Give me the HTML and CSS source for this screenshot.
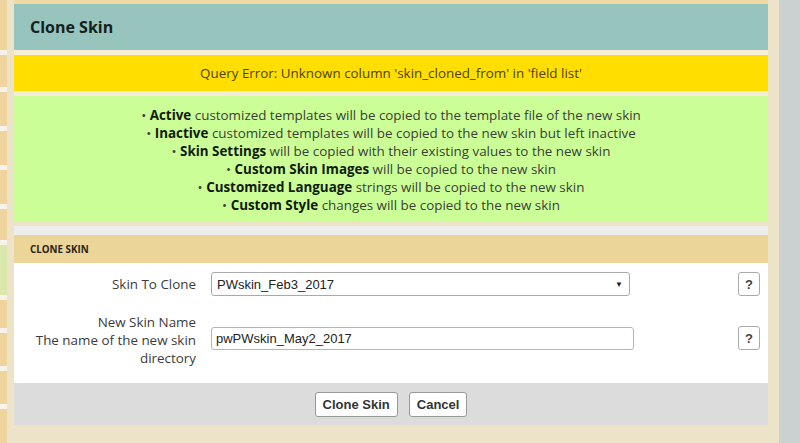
FILE: index.html
```html
<!DOCTYPE html>
<html lang="en">
<head>
    <meta charset="UTF-8">
    <title>Clone Skin</title>
    <link rel="stylesheet" href="styles.css">
</head>
<body>
    <div class="page">
        <div class="side-strip">
            <div class="tile" style="height: 50px"></div>
            <div class="tile" style="height: 32px"></div>
            <div class="tile" style="height: 34px"></div>
            <div class="tile" style="height: 34px"></div>
            <div class="tile" style="height: 34px"></div>
            <div class="tile" style="height: 31px"></div>
            <div class="tile green" style="height: 50px"></div>
            <div class="tile" style="height: 28px"></div>
            <div class="tile" style="height: 33px"></div>
            <div class="tile" style="height: 33px"></div>
            <div class="tile" style="height: 40px"></div>
        </div>

        <div class="main">
            <div class="page-title">Clone Skin</div>

            <div class="error-box">Query Error: Unknown column 'skin_cloned_from' in 'field list'</div>

            <div class="info-box">
                <div>&bull; <b>Active</b> customized templates will be copied to the template file of the new skin</div>
                <div>&bull; <b>Inactive</b> customized templates will be copied to the new skin but left inactive</div>
                <div>&bull; <b>Skin Settings</b> will be copied with their existing values to the new skin</div>
                <div>&bull; <b>Custom Skin Images</b> will be copied to the new skin</div>
                <div>&bull; <b>Customized Language</b> strings will be copied to the new skin</div>
                <div>&bull; <b>Custom Style</b> changes will be copied to the new skin</div>
            </div>

            <div class="form-panel">
                <div class="panel-head">CLONE SKIN</div>

                <div class="panel-body">
                    <div class="form-row first">
                        <div class="label">Skin To Clone</div>
                        <div class="field">
                            <div class="select">
                                <span>PWskin_Feb3_2017</span>
                                <span class="arrow">&#9660;</span>
                            </div>
                        </div>
                        <div class="help"><span class="help-btn">?</span></div>
                    </div>

                    <div class="form-row second">
                        <div class="label">
                            New Skin Name<br>
                            The name of the new skin<br>
                            directory
                        </div>
                        <div class="field">
                            <div class="text-input">pwPWskin_May2_2017</div>
                        </div>
                        <div class="help"><span class="help-btn">?</span></div>
                    </div>
                </div>

                <div class="panel-foot">
                    <button class="btn clone">Clone Skin</button>
                    <button class="btn">Cancel</button>
                </div>
            </div>
        </div>

        <div class="right-gap"></div>
        <div class="right-col"></div>
    </div>
</body>
</html>
```

FILE: styles.css
```css
* {
    margin: 0;
    padding: 0;
    box-sizing: border-box;
}

body {
    font-family: "Open Sans", "Liberation Sans", sans-serif;
    background: #ece3c9;
    color: #333;
    width: 800px;
    height: 443px;
    overflow: hidden;
}

.page {
    display: flex;
    height: 443px;
}

/* left sidebar sliver */
.side-strip {
    width: 7px;
    display: flex;
    flex-direction: column;
    gap: 5px;
    background: #f7f3ea;
}

.tile {
    background: #efd49d;
    flex-shrink: 0;
}

.tile.green {
    background: #dbe8ab;
}

.main {
    width: 754px;
    margin-left: 7px;
    padding-top: 4px;
    background: linear-gradient(#f0d8a2 0, #f0d8a2 4px, transparent 4px);
}

.page-title {
    height: 46px;
    background: #97c5be;
    padding-left: 16px;
    font-size: 16px;
    font-weight: bold;
    color: #15201f;
    display: flex;
    align-items: center;
}

.error-box {
    margin-top: 5px;
    height: 36px;
    background: #ffde00;
    color: #4f4300;
    font-size: 13.4px;
    display: flex;
    align-items: center;
    justify-content: center;
    box-shadow: 0 -5px 0 #f6eed6;
}

.info-box {
    margin-top: 5px;
    background: #ccfe98;
    padding: 10px 0 8px;
    text-align: center;
    font-size: 13.4px;
    line-height: 18px;
    color: #3a3f35;
    box-shadow: 0 -5px 0 #f3ecd9;
}

.info-box b {
    color: #101a0c;
}

.form-panel {
    margin-top: 4px;
    border-top: 9px solid #ededed;
}

.panel-head {
    height: 28px;
    background: #ecd598;
    padding-left: 16px;
    font-size: 9.8px;
    font-weight: bold;
    color: #2a2418;
    display: flex;
    align-items: center;
}

.panel-body {
    background: #fff;
}

.form-row {
    display: grid;
    grid-template-columns: 190px 1fr 30px;
    align-items: center;
}

.form-row.first {
    padding: 9px 0;
}

.form-row.second {
    padding: 8px 0 16px;
}

.label {
    text-align: right;
    padding-right: 8px;
    font-size: 13.4px;
    line-height: 18px;
    color: #3b3b3b;
}

.field {
    padding-left: 7px;
}

.select,
.text-input {
    height: 24px;
    border: 1px solid #a9a9a9;
    border-radius: 3px;
    background: #fff;
    font-family: "Liberation Sans", Arial, sans-serif;
    font-size: 13px;
    color: #222;
    display: flex;
    align-items: center;
    padding-left: 5px;
}

.select {
    width: 419px;
    justify-content: space-between;
    padding-right: 6px;
}

.select .arrow {
    font-size: 8px;
    color: #222;
}

.text-input {
    width: 423px;
    height: 23px;
    border-color: #b5b5b5;
    padding-left: 4px;
}

.second .field,
.second .help {
    margin-bottom: 4px;
}

.help {
    display: flex;
}

.help-btn {
    width: 22px;
    height: 24px;
    border: 1px solid #aaa;
    border-radius: 3px;
    display: flex;
    align-items: center;
    justify-content: center;
    font-family: "Liberation Sans", Arial, sans-serif;
    font-weight: bold;
    font-size: 13px;
    color: #444;
    background: #fff;
}

.panel-foot {
    height: 42px;
    background: #dcdcdc;
    display: flex;
    justify-content: center;
    align-items: center;
    gap: 11px;
}

.btn {
    height: 25px;
    padding: 0 7px;
    background: #fff;
    border: 1px solid #999;
    border-radius: 3px;
    font-family: "Liberation Sans", Arial, sans-serif;
    font-size: 13px;
    font-weight: bold;
    color: #333;
}

.right-gap {
    width: 11px;
}

.right-col {
    width: 21px;
    background: #cad1d0;
}
```
